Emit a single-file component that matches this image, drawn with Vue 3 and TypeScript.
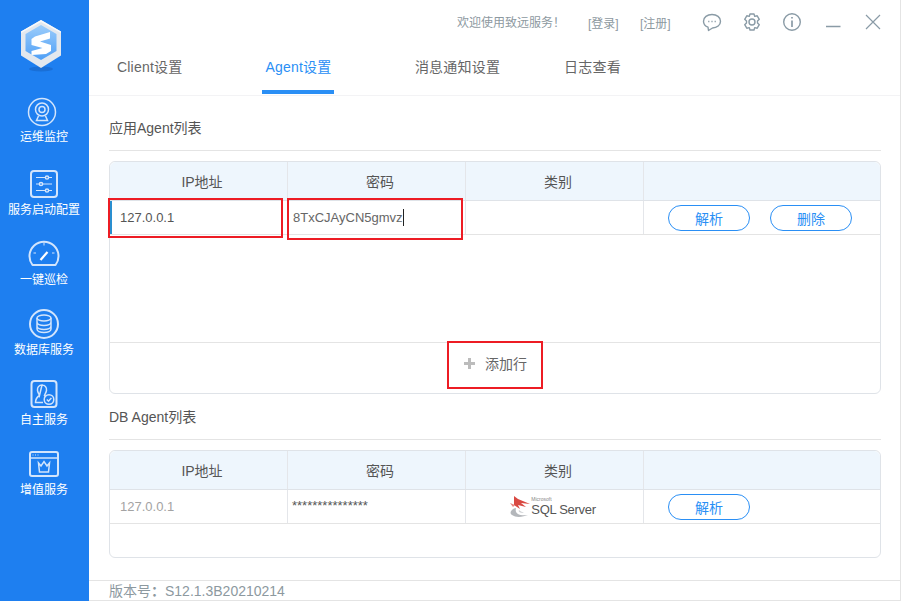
<script setup lang="ts">
const navItems = [
  { key: 'monitor', label: '运维监控' },
  { key: 'config', label: '服务启动配置' },
  { key: 'patrol', label: '一键巡检' },
  { key: 'db', label: '数据库服务' },
  { key: 'self', label: '自主服务' },
  { key: 'plus', label: '增值服务' },
]
const tabs = ['Client设置', 'Agent设置', '消息通知设置', '日志查看']
const heads = ['IP地址', '密码', '类别', '']
</script>

<template>
  <div class="app">
    <aside class="side">
      <svg class="logo" width="48" height="54" viewBox="0 0 48 54">
        <defs>
          <linearGradient id="lg" x1="0" y1="0" x2="0" y2="1">
            <stop offset="0" stop-color="#9ccdfb" />
            <stop offset="1" stop-color="#4f9ff6" />
          </linearGradient>
        </defs>
        <ellipse cx="24" cy="50" rx="12" ry="2.500" fill="#1a6fd6" />
        <path d="M24 1 44 12.500V36.500L24 49 4 36.500V12.500Z" fill="#e3e8ee" />
        <path d="M24 1 44 12.500V14L24 3 4 14V12.500Z" fill="#f7f9fb" />
        <path d="M24 6 39.500 15V32L24 41 8.500 32V15Z" fill="url(#lg)" />
        <path d="M33 13 18 17.500 14.500 20V26L25.500 29 14.500 32V36L29 35 34 32V26L23 22.500 33 19.500Z" fill="#fff" />
      </svg>
      <nav class="nav">
        <div v-for="item in navItems" :key="item.key" class="nav-item">
          <svg class="nav-icon" width="32" height="32" viewBox="0 0 32 32" fill="none" stroke="#d3e5fc" stroke-width="1.500">
            <template v-if="item.key === 'monitor'">
              <circle cx="16" cy="16" r="13.500" />
              <circle cx="16" cy="13.500" r="6.500" />
              <circle cx="16" cy="13.500" r="3" />
              <path d="M12.500 20 10.500 24.500H21.500L19.500 20" />
            </template>
            <template v-else-if="item.key === 'config'">
              <rect x="3" y="3" width="26" height="26" rx="3" stroke-width="2" />
              <path d="M8 9.500H24M8 16H24M8 22.500H24" stroke-width="1" />
              <circle cx="19" cy="9.500" r="1.600" fill="#1e7ff0" />
              <circle cx="13" cy="16" r="1.600" fill="#1e7ff0" />
              <circle cx="19" cy="22.500" r="1.600" fill="#1e7ff0" />
            </template>
            <template v-else-if="item.key === 'patrol'">
              <path d="M4.500 27A14.500 14.500 0 1 1 27.500 27Z" stroke-width="2" stroke-linejoin="round" />
              <path d="M12.500 22 19.500 14" stroke="#fff" stroke-width="2.200" />
              <path d="M16 4.500V7.500M5.500 15H8M26.500 15H24" stroke-width="1" />
            </template>
            <template v-else-if="item.key === 'db'">
              <circle cx="16" cy="16" r="14" stroke-width="2" />
              <ellipse cx="16" cy="10" rx="7" ry="3" />
              <path d="M9 10V21C9 23 12 24.500 16 24.500S23 23 23 21V10M9 14C9 16 12 17.500 16 17.500S23 16 23 14M9 18C9 20 12 21.500 16 21.500S23 20 23 18" />
            </template>
            <template v-else-if="item.key === 'self'">
              <rect x="3.500" y="3" width="25" height="26" rx="3" stroke-width="2" />
              <path d="M14 7C17 7 19 9.500 18.500 12.500 18 15 17 16 16.500 17.500L18 19M11.500 17.500C11 16 10 15 9.500 12.500 9 9.500 11 7 14 7ZM11.500 17.500C9 19 7.500 20.500 7.500 24.500H15" />
              <circle cx="21" cy="21.500" r="4.800" />
              <path d="M18.800 21.500 20.500 23.200 23.400 20" />
            </template>
            <template v-else>
              <rect x="2" y="4" width="28" height="24" rx="2" stroke-width="2" />
              <path d="M2 10H30" stroke-width="1.500" />
              <path d="M4.500 7H5.500M7 7H8M9.500 7H10.500" stroke-width="1" />
              <path d="M10.500 15 13 18 16 13.500 19 18 21.500 15 20.500 24H11.500Z" />
            </template>
          </svg>
          <span class="nav-label">{{ item.label }}</span>
        </div>
      </nav>
    </aside>

    <main class="main">
      <header class="head">
        <div class="topbar">
          <span class="welcome">欢迎使用致远服务！</span>
          <span class="link link-login">[登录]</span>
          <span class="link link-reg">[注册]</span>
          <svg class="ti ti-chat" width="20" height="20" viewBox="0 0 20 20" fill="none" stroke="#8a9ba6" stroke-width="1.400">
            <path d="M10 2.500C5.200 2.500 1.500 5.300 1.500 9.200 1.500 12 3.500 14.200 6 15.200L6.500 18.500 10.500 16C15 16 18.500 13 18.500 9.200 18.500 5.300 14.800 2.500 10 2.500Z" stroke-linejoin="round" />
            <path d="M6.200 9.500H7.400M9.400 9.500H10.600M12.600 9.500H13.800" stroke-width="1.500" />
          </svg>
          <svg class="ti ti-gear" width="20" height="20" viewBox="0 0 20 20" fill="none" stroke="#8a9ba6" stroke-width="1.400">
            <path d="M8 2H12L12.700 4.400 15.200 3.800 17.300 7.300 15.500 9V11L17.300 12.700 15.200 16.200 12.700 15.600 12 18H8L7.300 15.600 4.800 16.200 2.700 12.700 4.500 11V9L2.700 7.300 4.800 3.800 7.300 4.400Z" stroke-linejoin="round" />
            <circle cx="10" cy="10" r="3" />
          </svg>
          <svg class="ti ti-info" width="20" height="20" viewBox="0 0 20 20" fill="none" stroke="#8a9ba6" stroke-width="1.400">
            <circle cx="10" cy="10" r="8.300" />
            <path d="M10 8.500V15M10 5V6.600" stroke-width="1.700" />
          </svg>
          <svg class="ti ti-min" width="16" height="20" viewBox="0 0 16 20" fill="none" stroke="#8a9ba6" stroke-width="1.500">
            <path d="M1 14.500H15.500" />
          </svg>
          <svg class="ti ti-close" width="16" height="16" viewBox="0 0 16 16" fill="none" stroke="#8a9ba6" stroke-width="1.200">
            <path d="M1 1 15 15M15 1 1 15" />
          </svg>
        </div>
        <div class="tabs">
          <div v-for="(t, i) in tabs" :key="t" class="tab" :class="['tab-' + i, { active: i === 1 }]">{{ t }}</div>
        </div>
      </header>

      <section class="content">
        <h3 class="title">应用Agent列表</h3>
        <div class="table table-a">
          <div class="row row-head">
            <div v-for="(h, i) in heads" :key="i" class="cell">{{ h }}</div>
          </div>
          <div class="row row-body">
            <div class="cell cell-ip focus">
              127.0.0.1
              <span class="mark mark-ip"></span>
            </div>
            <div class="cell cell-pw">
              <span>8TxCJAyCN5gmvz</span><i class="caret"></i>
              <span class="mark mark-pw"></span>
            </div>
            <div class="cell"></div>
            <div class="cell cell-ops">
              <button class="btn">解析</button>
              <button class="btn">删除</button>
            </div>
          </div>
          <div class="spacer spacer-a"></div>
          <div class="add">
            <svg class="plus" width="11" height="11" viewBox="0 0 11 11">
              <path d="M4 0H7V4H11V7H7V11H4V7H0V4H4Z" fill="#bcbcbc" />
            </svg>
            <span>添加行</span>
            <span class="mark mark-add"></span>
          </div>
        </div>

        <h3 class="title title-db">DB Agent列表</h3>
        <div class="table table-b">
          <div class="row row-head">
            <div v-for="(h, i) in heads" :key="i" class="cell">{{ h }}</div>
          </div>
          <div class="row row-body">
            <div class="cell cell-ip muted">127.0.0.1</div>
            <div class="cell cell-stars">***************</div>
            <div class="cell cell-logo">
              <svg width="22" height="23" viewBox="0 0 22 23" fill="none">
                <path d="M5 1 9 4 21 9 12 8 17 12 9 10 11 14 5 10Z" fill="#d94a43" />
                <path d="M1 8 6 10 4 12Z" fill="#e8857f" />
                <path d="M7 13C2 14 0 18 3 20 7 23 14 22 19 20 13 21 5 20 7 13Z" fill="#b4b7bb" />
                <path d="M10 15C9 17 11 18 15 18 13 17 11 16 10 15Z" fill="#d0d2d5" />
              </svg>
              <span class="sql"><small>Microsoft</small><span>SQL Server</span></span>
            </div>
            <div class="cell cell-ops">
              <button class="btn">解析</button>
            </div>
          </div>
          <div class="spacer spacer-b"></div>
        </div>
      </section>

      <footer class="foot">版本号<b>：</b>S12.1.3B20210214</footer>
    </main>
  </div>
</template>

<style>
html, body { margin: 0; background: #fff; }
</style>

<style scoped>
.app {
  display: flex;
  width: 901px;
  height: 601px;
  overflow: hidden;
  font-family: "Liberation Sans", "Noto Sans CJK SC", sans-serif;
  font-size: 14px;
  color: #555;
  background: #fff;
}
.side {
  width: 89px;
  flex: none;
  background: #1e7ff0;
  display: flex;
  flex-direction: column;
  align-items: center;
  padding: 19px 1px 0 0;
  box-sizing: border-box;
}
.logo { display: block; margin-right: 6px; }
.nav { margin-top: 23px; display: flex; flex-direction: column; width: 100%; }
.nav-item {
  height: 70px;
  display: flex;
  flex-direction: column;
  align-items: center;
  color: #fff;
}
.nav-item:first-child { height: 72px; }
.nav-item:first-child .nav-icon { margin-left: -4px; }
.nav-item:first-child .nav-label { margin-top: 0; }
.nav-icon { display: block; }
.nav-label { font-size: 12px; line-height: 18px; margin-top: 1px; white-space: nowrap; }

.main {
  flex: 1;
  min-width: 0;
  display: flex;
  flex-direction: column;
  border-right: 1px solid #e4e4e4;
}
.head { height: 96px; box-sizing: border-box; border-bottom: 1px solid #f3f3f5; flex: none; }
.topbar {
  height: 44px;
  display: flex;
  align-items: center;
  padding-left: 368px;
  font-size: 12px;
  color: #8d999f;
}
.welcome { width: 131px; white-space: nowrap; margin-bottom: 2px; }
.link { white-space: nowrap; }
.link-login { width: 52px; }
.link-reg { width: 62px; }
.ti { flex: none; display: block; }
.ti-chat { margin-right: 20px; }
.ti-gear { margin-right: 20px; }
.ti-info { margin-right: 23px; }
.ti-min { margin-right: 24px; }
.tabs { display: flex; height: 50px; padding-left: 25px; }
.tab {
  font-size: 14px;
  letter-spacing: 0.200px;
  line-height: 46px;
  height: 50px;
  box-sizing: border-box;
  color: #666;
  white-space: nowrap;
  text-align: center;
  padding: 0 3px;
}
.tab-0 { margin-right: 77px; }
.tab-1 { margin-right: 77.500px; }
.tab-2 { margin-right: 58px; }
.tab.active { color: #2a8ff5; border-bottom: 4px solid #2a8ff5; }

.content { flex: 1; padding: 0 19px 0 20px; min-height: 0; }
.title {
  margin: 0;
  height: 55px;
  box-sizing: border-box;
  padding-top: 22px;
  line-height: 20px;
  font-size: 14px;
  font-weight: normal;
  color: #555;
  border-bottom: 1px solid #e4e4e4;
}
.title-db { height: 46px; padding-top: 13px; }
.table {
  margin-top: 10px;
  width: 772px;
  box-sizing: border-box;
  border: 1px solid #dfe3e8;
  border-radius: 6px;
}
.row { display: grid; grid-template-columns: 178px 178px 178px 1fr; }
.row-head {
  height: 39px;
  box-sizing: border-box;
  background: #eef6fd;
  border-bottom: 1px solid #dfe3e8;
  border-radius: 6px 6px 0 0;
}
.row-head .cell { justify-content: center; color: #555; font-size: 14px; padding-left: 7px; }
.row-body { height: 34px; border-bottom: 1px solid #e4e4e4; box-sizing: border-box; }
.cell {
  display: flex;
  align-items: center;
  box-sizing: border-box;
  border-right: 1px solid #e4e6ea;
  position: relative;
  font-size: 13px;
  color: #555;
}
.cell:last-child { border-right: 0; }
.cell-ip { padding-left: 10px; }
.cell-ip.focus { border-left: 2px solid #2a8fd0; padding-left: 8px; }
.cell-ip.muted { color: #a3a3a3; }
.cell-pw { padding-left: 5px; color: #666; }
.caret { width: 1px; height: 17px; background: #222; display: block; }
.cell-stars { padding-left: 4px; font-size: 13px; color: #555; padding-bottom: 2px; }
.cell-ops { padding-left: 24px; gap: 20px; }
.cell-logo { justify-content: center; gap: 0; padding: 0 4px 0 0; }
.sql { display: flex; flex-direction: column; white-space: nowrap; margin-bottom: 2px; }
.sql span { font-size: 13px; line-height: 13px; color: #555; letter-spacing: -0.300px; }
.sql small { font-size: 5px; line-height: 7px; color: #888; }
.btn {
  width: 82px;
  height: 26px;
  padding: 0;
  box-sizing: border-box;
  border: 1px solid #2a8ff5;
  border-radius: 13px;
  background: #fff;
  color: #2a8ff5;
  font: inherit;
  font-size: 14px;
}
.spacer-a { height: 107px; border-bottom: 1px solid #e4e4e4; }
.spacer-b { height: 33px; }
.add {
  height: 50px;
  box-sizing: border-box;
  display: flex;
  align-items: center;
  justify-content: center;
  position: relative;
  color: #666;
  font-size: 14px;
  padding: 0 0 10px 1px;
}
.plus { display: block; margin-right: 10px; }
.mark { position: absolute; border: 2px solid #ed1c24; box-sizing: border-box; pointer-events: none; }
.mark-ip { left: -4px; top: -3px; width: 175px; height: 40px; }
.mark-pw { left: -1px; top: -3px; width: 176px; height: 42px; }
.mark-add { left: 337px; top: -2px; width: 96px; height: 48px; }
.foot {
  height: 21px;
  flex: none;
  box-sizing: border-box;
  border-top: 1px solid #e4e4e4;
  border-bottom: 1px solid #e4e4e4;
  padding-left: 20px;
  font-size: 14px;
  line-height: 20px;
  color: #8d999f;
}
</style>
